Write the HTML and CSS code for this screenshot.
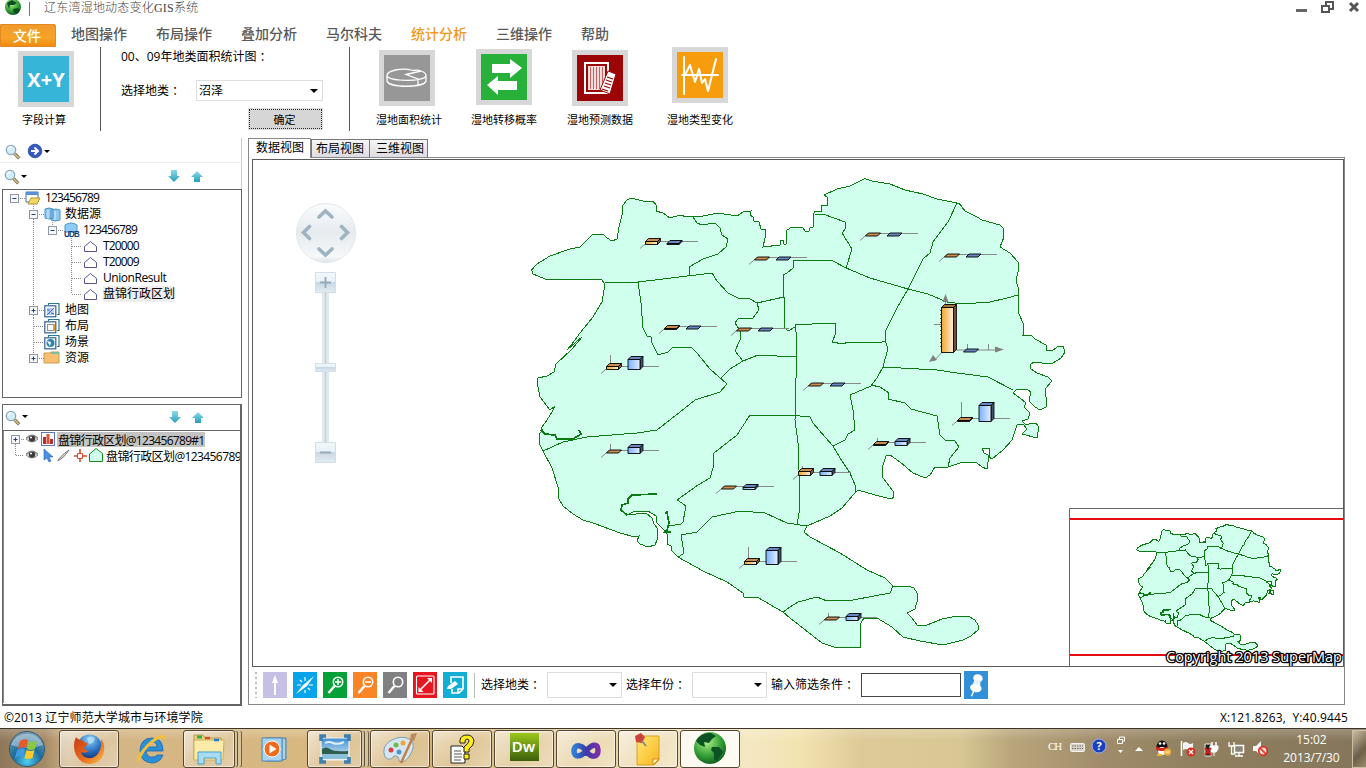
FILE: index.html
```html
<!DOCTYPE html>
<html lang="zh-CN">
<head>
<meta charset="utf-8">
<title>辽东湾湿地动态变化GIS系统</title>
<link rel="stylesheet" href="styles.css">
</head>
<body>
<svg class="defs" width="0" height="0">
  <defs>
    <radialGradient id="gGlobe" cx=".4" cy=".3" r=".75"><stop offset="0" stop-color="#b5f08a"/><stop offset=".55" stop-color="#3aa63a"/><stop offset="1" stop-color="#0b5a1c"/></radialGradient>
    <linearGradient id="gOrange"><stop offset="0" stop-color="#f0a52c"/><stop offset="1" stop-color="#fff0dc"/></linearGradient>
    <linearGradient id="gBlue"><stop offset="0" stop-color="#78b0ff"/><stop offset="1" stop-color="#e4efff"/></linearGradient>
    <linearGradient id="gArrow" x2="0" y2="1"><stop offset="0" stop-color="#8adcea"/><stop offset="1" stop-color="#2a9dba"/></linearGradient>
    <linearGradient id="gPad" x2="0" y2="1"><stop offset="0" stop-color="#fafcfd"/><stop offset=".5" stop-color="#e6ebef"/><stop offset=".9" stop-color="#f6f8fa"/><stop offset="1" stop-color="#dfe4e8"/></linearGradient>
    <linearGradient id="gKey" x2="0" y2="1"><stop offset="0" stop-color="#f3f9fc"/><stop offset=".49" stop-color="#e6f0f6"/><stop offset=".5" stop-color="#c9d8e2"/><stop offset="1" stop-color="#e2ecf3"/></linearGradient>
    <radialGradient id="gOrb" cx=".5" cy=".85" r=".9"><stop offset="0" stop-color="#4fd0f0"/><stop offset=".45" stop-color="#1c6c9c"/><stop offset="1" stop-color="#8aa9ba"/></radialGradient>
    <radialGradient id="gFox" cx=".5" cy=".2" r=".8"><stop offset="0" stop-color="#8fd0f5"/><stop offset=".6" stop-color="#2a6fc0"/><stop offset="1" stop-color="#12336f"/></radialGradient>
    <linearGradient id="gFlame" x2="1" y2="1"><stop offset="0" stop-color="#c93a14"/><stop offset=".55" stop-color="#ea6a1c"/><stop offset="1" stop-color="#f8c04a"/></linearGradient>
    <linearGradient id="gVs"><stop offset="0" stop-color="#2f7fd4"/><stop offset=".5" stop-color="#3c3aa8"/><stop offset="1" stop-color="#7a2fa8"/></linearGradient>
    <linearGradient id="gNote" x2="1" y2="1"><stop offset="0" stop-color="#ffe873"/><stop offset="1" stop-color="#f8b520"/></linearGradient>
    <linearGradient id="gSky" x2="0" y2="1"><stop offset="0" stop-color="#3d8fd0"/><stop offset="1" stop-color="#e4f3fa"/></linearGradient>

    <g id="mag"><circle cx="6" cy="6" r="4.700" fill="#d4ecf8" stroke="#8ba9bd" stroke-width="1.300"/><path d="M3.500 5.500a3 3 0 0 1 3-2.500" stroke="#fff" stroke-width="1.300" fill="none"/><path d="M9.700 9.700l4.400 4.600" stroke="#7d6c48" stroke-width="3.200"/><path d="M9.700 9.700l4 4.200" stroke="#d8c38c" stroke-width="1.500"/></g>
    <path id="down" d="M3 0h6v6h3l-6 6-6-6h3z" fill="url(#gArrow)"/>
    <path id="up" d="M6 0l6 6H9v5H3V6H0z" fill="url(#gArrow)"/>
    <g id="minus"><rect x=".5" y=".5" width="8" height="8" fill="#f6f7fa" stroke="#8f97a8"/><path d="M2.500 4.500h4" stroke="#24407c"/></g>
    <g id="plus"><use href="#minus"/><path d="M4.500 2.500v4" stroke="#24407c"/></g>
    <path id="poly" d="M.5 6.500L6.500 1.500 12.500 6.500V11.500H.5z" fill="#fff" stroke="#55558c"/>
    <g id="pages"><path d="M4.500 2V.5h10.500v11h-2" fill="#fff" stroke="#2e7a8c" stroke-width="1.200"/><rect x=".8" y="2.800" width="11" height="11" fill="#fff" stroke="#2e5f9c" stroke-width="1.200"/></g>
    <g id="eye"><path d="M0 5Q6-1 12 5 6 11 0 5z" fill="#e2e2e2" stroke="#8b8b8b"/><circle cx="6" cy="4.600" r="3.200" fill="#3c3c3c"/><circle cx="5" cy="3.500" r="1" fill="#fff"/><path d="M0 4Q6-2 12 4" fill="none" stroke="#777"/></g>

    <g id="region">
      <path class="land" d="M531.500 270L537 264 550 256 570 249 580 247 587 240 592 235 603 234 607 238 612 241 617 239 619 227 622 215 623 205 627 200 631 198 643 201 653 201 656 205 656 211 663 213 670 218 680 215 687 217 703 216 718 213 737 216 743 212 751 211 750 215 753 217 754 221 759 222 761 229 766 230 765 238 763 247 780 245 781 240 783 240 784 244 786 244 787 230 792 227 803 228 805 231 809 231 810 228 813 227 813 215 815 211 821 212 822 205 827 205 827 197 824 195 837 189 850 186 865 178.500 872 181 890 184 905 190 923 194 937 199 957 203 959 203 965 211 977 217 982 220 1000 225 1003 228 1004 237 1000 247 1010 253 1018 262 1018 272 1016 280 1018 287 1019 314 1024 325 1023 335 1031 335 1035 339 1046 345 1046 350 1052 351 1057 347 1063 346 1065 352 1061 358 1053 363 1042 363 1034 362 1030 365 1031 369 1037 373 1048 377 1052 381 1046 388 1045 394 1047 400 1046 407 1040 410 1035 407 1029 401 1031 392 1027 389 1017 389 1013 393 1020 398 1026 403 1024 407 1030 413 1028 419 1022 421 1025 424 1029 424 1036 423 1039 427 1037 438 1022 434 1027 429 1023 424 1017 425 1012 440 1003 450 992 459 989 457 990 448 982 448 984 453 988 455 988 462 987 469 982 467 977 463 963 462 948 467 935 467 930 475 925 478 913 473 900 462 890 455 886 456 882 468 883 478 893 491 894 497 891 499 875 495 858 490 853 495 842 508 830 516 807 526 804 532 810 537 840 553 867 570 885 578 893 586 908 586 914 588 917 593 917 602 915 609 907 613 912 618 917 625 927 625 942 619 957 616 968 616 975 620 978 625 978 630 971 636 963 640 943 645 920 641 903 637 892 627 877 618 864 618 861 623 860 635 861 647 837 648 822 643 790 618 783 612 757 597 744 597 743 593 727 582 703 571 678 557 672 551 671 546 667 544 668 535 663 529 657 523 656 516 648 511 635 511 627 515 636 514 646 513 652 518 654 524 658 529 657 540 655 545 648 547 640 544 637 541 639 536 635 537 620 533 593 523 583 520 573 514 563 506 558 497 558 487 552 468 543 451 539 443 540 433 543 430 541 428 545 423 552 412 555 406 550 410 540 397 537 382 538 378 547 376 554 372 556 364 572 349 582 337 575 343 567 350 572 344 580 333 593 317 602 302 605 284 602 280 587 279 563 280 545 279 533 274z"/>
      <path class="edge" d="M693 217L697 223 702 225 715 223 720 228 722 235 728 239 726 247 718 254 703 259 689 267 690 276M605 283L638 282 663 279 712 273 717 281 728 293 738 298 750 299 757 303 784 297M638 282L641 303 643 328 647 336 651 337 652 343 658 355 668 352 673 347 691 347 697 353 710 369 727 384 720 392 695 400 680 412 657 430 637 433 587 437 563 442 543 451M720 379L730 369 743 361 758 355 777 356 797 356M743 361L735 351 740 340 741 332 735 323 738 319 753 318 759 310 757 303M784 297L785 328 788 331 795 327 795 324 812 324 835 323 836 333 832 342 843 344 848 342 882 342 885 341M784 297L783 275 787 273 793 268 793 260 833 261 846 268 870 278 908 289 928 294 947 302 963 304 990 302 1007 298 1018 295M815 214L823 214 845 222 846 228 842 233 847 241 852 249 846 268M957 203L948 222 933 242 930 253 923 259 908 289 897 308 886 330 885 341 888 348 883 367 877 378 871 386 850 395 853 410 855 430 848 434 845 440 833 446 825 437 813 423 810 417 790 415 750 415 737 435 714 453 713 468 710 478 698 485 677 500 682 503 686 506 683 522 681 524 669 526M795 327L797 337 795 420 798 443 800 497 799 513 797 525M883 367L937 370 957 373 988 377 1013 390M871 385L880 387 889 393 888 399 905 403 911 409 937 416 940 435 945 440 955 441 959 447 950 458 948 467M833 446L840 458 850 473 855 485 856 492M678 557L683 554 683 547 681 535 697 532 712 517 740 511 765 513 787 523 807 526M783 612L790 607 798 602 817 597 827 601 853 600 890 593 893 586"/>
      <path class="bank" d="M541 430L545 434 555 435 557 439 573 439 581 434 579 430M657 494L632 495 628 499 628 503 622 505 621 510 627 515M665 513L667 512 669 523 667 530 665 532 671 532"/>
    </g>
  </defs>
</svg>

<header class="titlebar">
  <svg width="38" height="20" viewBox="0 0 38 20"><circle cx="13" cy="7" r="8" fill="url(#gGlobe)"/><path d="M7 3l5-3 5 3-3 2-4 0-1 4zM13 9l5-1 2 2-3 4-3-1z" fill="#0c4f20"/><path d="M29.500 2v14" stroke="#777"/></svg>
  <span class="title">辽东湾湿地动态变化GIS系统</span>
  <svg class="wincontrols" width="76" height="20" viewBox="1290 0 76 20"><path d="M1296 9h11v3h-11z" fill="#666"/><path d="M1322 6h7v6h-7zM1326 5V2h7v7h-4" fill="none" stroke="#555" stroke-width="2"/><path d="M1350 3l8 8m0-8l-8 8" stroke="#555" stroke-width="3"/></svg>
</header>

<nav class="menu">
  <span class="file">文件</span>
  <span class="item">地图操作</span><span class="item">布局操作</span><span class="item">叠加分析</span><span class="item">马尔科夫</span><span class="item current">统计分析</span><span class="item">三维操作</span><span class="item">帮助</span>
</nav>

<section class="ribbon">
  <div class="tool calc"><div class="tile cyan">X+Y</div><span>字段计算</span></div>
  <div class="stat">
    <p>00、09年地类面积统计图<i class="colon">：</i></p>
    <div class="row"><span>选择地类<i class="colon">：</i></span><span class="select big">沼泽</span></div>
    <span class="ok">确定</span>
  </div>
  <div class="tools">
    <div class="tool t1"><svg class="tile gray" viewBox="0 0 46 46"><g fill="none" stroke="#fff" stroke-width="1.300"><path d="M29 15.500C17 12 3 16 3 20.500 4 27 42 27 42 20.500c0-2-2-3.500-5-4.500L22 19.500l12 4.500v5.500M3 20.500V26c2 7 37 7 39 0v-5.500M29 15.500q5-1 8 .5"/></g></svg><span>湿地面积统计</span></div>
    <div class="tool t2"><svg class="tile green" viewBox="0 0 46 46"><path d="M11 10h18V5l12 9-12 10v-5H11zM36 27H17v-5L6 31l11 10v-5h19z" fill="#fff"/></svg><span>湿地转移概率</span></div>
    <div class="tool t3"><svg class="tile red" viewBox="0 0 46 46"><path d="M8 8h23v30H8z" fill="none" stroke="#fff" stroke-width="2"/><path d="M11 11h17v24H11z" fill="#f3dede"/><path d="M13.500 12v22m3-22v22m3-22v22m3-22v22m3-22v22" stroke="#c86060"/><path d="M31 16l8 3-6 20-10-4z" fill="#fff" stroke="#9b0505"/><path d="M30 22l6 2m-7 1l6 2m-7 1l6 2m-7 1l6 2m-8 1l6 2" stroke="#9b0505" stroke-width="1.200"/></svg><span>湿地预测数据</span></div>
    <div class="tool t4"><svg class="tile amber" viewBox="0 0 46 46"><g fill="none" stroke="#fff" stroke-width="2" stroke-linejoin="round" stroke-linecap="round"><path d="M7 5v37M5 23h36"/><path d="M8 23l5-10 5 17 4-13 3 14 3-4 3 12 8-32"/></g></svg><span>湿地类型变化</span></div>
  </div>
</section>

<main class="work">
  <aside class="side">
    <div class="bar first"><svg width="60" height="24" viewBox="0 140 60 24"><use href="#mag" x="5" y="144"/><circle cx="35" cy="151" r="6.800" fill="#3459c4" stroke="#2b4595" stroke-width=".8"/><path d="M31 151h7m-3.500-3.500l3.500 3.500-3.500 3.500" stroke="#fff" stroke-width="2" fill="none"/><path d="M44 150h6l-3 3z"/></svg></div>
    <div class="bar second"><svg width="240" height="25" viewBox="0 164 240 25"><use href="#mag" x="4" y="169"/><path d="M21 175h6l-3 3z"/><use href="#down" x="168" y="170"/><use href="#up" x="191" y="171"/></svg></div>
    <div class="tree">
      <div class="node"><svg width="42" height="16" viewBox="3 190 42 16"><use href="#minus" x="10" y="194"/><path class="dots" d="M20 198.500h6M33.500 204v2"/><path d="M26 192h12v10H26z" fill="#fff" stroke="#3b6fb8"/><path d="M26 192h12v3H26z" fill="#5a8fd8"/><path d="M28 204l3-6h9l-3 6z" fill="#f5d868" stroke="#b8922c"/></svg><span>123456789</span></div>
      <div class="node"><svg width="62" height="16" viewBox="3 206 62 16"><use href="#minus" x="29" y="210"/><path class="dots" d="M33.500 206v4m0 9v3M39 214.500h6M52.500 220v2"/><path d="M45 209q4-2 8 0v9q-4 2-8 0zM51 210q5-2 9 0v10q-4 2-9 0z" fill="#8cc8f0" stroke="#4a90c8"/><path d="M48 210v9m7-8v9" stroke="#d8f0ff"/></svg><span>数据源</span></div>
      <div class="node"><svg width="80" height="16" viewBox="3 222 80 16"><use href="#minus" x="48" y="226"/><path class="dots" d="M33.500 222v16M52.500 222v4M58 230.500h6M71.500 236v2"/><path d="M65 225q6-4 12 0v7H65z" fill="#8cccf4" stroke="#4a98d0"/><text x="64" y="237" class="udb" textLength="15" lengthAdjust="spacingAndGlyphs">UDB</text></svg><span>123456789</span></div>
      <div class="node"><svg width="100" height="16" viewBox="3 238 100 16"><path class="dots" d="M33.500 238v16M71.500 238v16M72 246.500h10"/><use href="#poly" x="84" y="240"/></svg><span>T20000</span></div>
      <div class="node"><svg width="100" height="16" viewBox="3 238 100 16"><path class="dots" d="M33.500 238v16M71.500 238v16M72 246.500h10"/><use href="#poly" x="84" y="240"/></svg><span>T20009</span></div>
      <div class="node"><svg width="100" height="16" viewBox="3 238 100 16"><path class="dots" d="M33.500 238v16M71.500 238v16M72 246.500h10"/><use href="#poly" x="84" y="240"/></svg><span class="wide">UnionResult</span></div>
      <div class="node"><svg width="100" height="16" viewBox="3 238 100 16"><path class="dots" d="M33.500 238v16M71.500 238v8M72 246.500h10"/><use href="#poly" x="84" y="240"/></svg><span class="soft">盘锦行政区划</span></div>
      <div class="node"><svg width="62" height="16" viewBox="3 302 62 16"><path class="dots" d="M33.500 302v4m0 9v3M39 310.500h5"/><use href="#plus" x="29" y="306"/><use href="#pages" x="44" y="303"/><path d="M47 308h7v7h-7z" fill="#b8cef4"/><path d="M47 315l7-7m-7 2l3 0m1 3l3 1" stroke="#3a6ac8"/></svg><span>地图</span></div>
      <div class="node"><svg width="62" height="16" viewBox="3 318 62 16"><path class="dots" d="M33.500 318v16M34 326.500h10"/><use href="#pages" x="44" y="319"/><path d="M47.500 324.500h6v6h-6z" fill="none" stroke="#222" stroke-dasharray="1 1"/><path d="M54 324v7" stroke="#e09a2c" stroke-width="2"/></svg><span>布局</span></div>
      <div class="node"><svg width="62" height="16" viewBox="3 334 62 16"><path class="dots" d="M33.500 334v16M34 342.500h10"/><use href="#pages" x="44" y="335"/><circle cx="50.500" cy="343" r="4" fill="#2e86b0"/><path d="M47 341l4 1-1 4z" fill="#fff"/></svg><span>场景</span></div>
      <div class="node"><svg width="62" height="16" viewBox="3 350 62 16"><path class="dots" d="M33.500 350v4M39 358.500h5"/><use href="#plus" x="29" y="354"/><path d="M44 353h6l1-1h8v11H44z" fill="#f8c070" stroke="#c8a050"/><path d="M51 352h8v2h-8z" fill="#7ac0a0"/></svg><span>资源</span></div>
    </div>
    <div class="layers">
      <div class="bar"><svg width="238" height="25" viewBox="3 406 238 25"><use href="#mag" x="5" y="411"/><path d="M22 416h6l-3 3z"/><use href="#down" x="169" y="412"/><use href="#up" x="192" y="413"/></svg></div>
      <div class="list">
        <div class="node"><svg width="53" height="16" viewBox="4 432 53 16"><use href="#plus" x="12" y="435"/><path class="dots" d="M16.500 444v4M22 439.500h4"/><use href="#eye" x="27" y="434"/><rect x="42.500" y="432.500" width="13" height="13" fill="#fff" stroke="#5a78c0"/><path d="M44 437h3v7h-3zM51 439h3v5h-3z" fill="#b03030"/><path d="M47.500 434h3v10h-3z" fill="#e05030"/></svg><span class="chosen">盘锦行政区划@123456789#1</span></div>
        <div class="node"><svg width="100" height="16" viewBox="4 448 100 16"><path class="dots" d="M16.500 448v8M17 455.500h8"/><use href="#eye" x="27" y="450"/><path d="M45 449l9 8-4 0 2 4-2 1-2-4-3 2z" fill="#4a90e0" stroke="#2a5cae" stroke-width=".6"/><path d="M59 461q1-4 11-11-5 8-11 11z" fill="#ddd" stroke="#777"/><path d="M81 449v4m0 5v4m-6-6h4m5 0h4" stroke="#d84a28" stroke-width="1.600"/><path d="M78.500 453.500h5v5h-5z" fill="#fff" stroke="#d84a28"/><path d="M90.500 454L97 448.500l6.500 5v8h-13z" fill="#cffeee" stroke="#1a8a1a"/></svg><span>盘锦行政区划@123456789</span></div>
      </div>
    </div>
  </aside>

  <section class="view">
    <div class="tabs"><span class="tab on">数据视图</span><span class="tab">布局视图</span><span class="tab">三维视图</span></div>
    <div class="frame">
      <div class="mapbox">
        <svg id="map" width="1090" height="506" viewBox="253 160 1090 506">
          <use href="#region"/>
          <g id="charts"></g>
          <g class="compass">
            <circle cx="326" cy="233" r="29.500" fill="url(#gPad)" stroke="#e2e7ea"/>
            <path d="M319 217l6.500-6 6.500 6M319 249l6.500 6 6.500-6M309.500 226.500l-6 6 6 6M341.500 226.500l6 6-6 6" fill="none" stroke="#9fb4c2" stroke-width="3.600" stroke-linecap="round"/>
            <path d="M322 293h7v149h-7z" fill="#e0e9f0"/><path d="M325.500 293v149" stroke="#c4d2de" stroke-width="1.500"/>
            <path d="M315.500 272.500h20v20h-20z" fill="url(#gKey)" stroke="#d3dfe7"/><path d="M315.500 363.500h20v8h-20z" fill="url(#gKey)" stroke="#d3dfe7"/><path d="M315.500 442.500h20v20h-20z" fill="url(#gKey)" stroke="#d3dfe7"/>
            <path d="M320 282.500h11M325.500 277v11M320 452.500h11" stroke="#98a8b8" stroke-width="1.800"/>
          </g>
          <g class="inset">
            <path d="M1069.500 666V508.500H1343" fill="#fff" stroke="#666"/>
            <path d="M1070 519h273M1070 655h273" stroke="#e60b10" stroke-width="2"/>
            <use href="#region" transform="translate(993.200 476.200) scale(.27)"/>
          </g>
          <text class="copy" x="1166" y="662" textLength="176" lengthAdjust="spacingAndGlyphs">Copyright 2013 SuperMap</text>
        </svg>
      </div>
      <div class="maptools">
        <i class="grip"></i>
        <svg class="mt lilac" viewBox="0 0 24 26"><path d="M12 3l3 8h-2v12h-2V11H9z" fill="#fff"/></svg>
        <svg class="mt sky" viewBox="0 0 24 26"><path d="M3 22l7-9 11-9-7 10z" fill="#fff"/><path d="M12 5v4m0 9v3M4 13h4m8 0h4M7 8l2 2m6 6l2 2" stroke="#fff" stroke-width="1.200"/></svg>
        <svg class="mt leaf" viewBox="0 0 24 26"><circle cx="15" cy="10" r="4.700" fill="none" stroke="#fff" stroke-width="1.600"/><path d="M11.500 14l-6 7" stroke="#fff" stroke-width="2.500"/><path d="M12 10h6m-3-3v6" stroke="#fff" stroke-width="1.500"/></svg>
        <svg class="mt tang" viewBox="0 0 24 26"><circle cx="15" cy="10" r="4.700" fill="none" stroke="#fff" stroke-width="1.600"/><path d="M11.500 14l-6 7" stroke="#fff" stroke-width="2.500"/><path d="M12 10h6" stroke="#fff" stroke-width="1.500"/></svg>
        <svg class="mt stone" viewBox="0 0 24 26"><circle cx="15" cy="10" r="4.700" fill="none" stroke="#fff" stroke-width="1.600"/><path d="M11.500 14l-6 7" stroke="#fff" stroke-width="2.500"/></svg>
        <svg class="mt ruby" viewBox="0 0 24 26"><rect x="3.500" y="4" width="17.500" height="18" rx="1" fill="none" stroke="#fff" stroke-width="1.100"/><path d="M7 18L17 8" stroke="#fff" stroke-width="1.600"/><path d="M14 6h5v5zM5.500 15v5h5z" fill="#fff"/></svg>
        <svg class="mt aqua" viewBox="0 0 24 26"><path d="M8 11V5h12v12l-4 4H9v-4M20 17h-5v4" fill="none" stroke="#fff" stroke-width="1.600"/><path d="M4 17l1-3 7-5 3 3-7 5z" fill="#fff"/></svg>
        <i class="vsep"></i>
        <span class="l1">选择地类<i class="colon">：</i></span><span class="select s1"></span><span class="l2">选择年份<i class="colon">：</i></span><span class="select s2"></span><span class="l3">输入筛选条件<i class="colon">：</i></span><span class="input"></span>
        <svg class="pin" viewBox="0 0 24 28"><g transform="rotate(12 12 14)"><ellipse cx="12.500" cy="7" rx="4.800" ry="4" fill="#fff"/><path d="M9.500 9h6l1 6h-8z" fill="#e6f1fa"/><ellipse cx="12.500" cy="17" rx="5.800" ry="4.200" fill="#fff"/><path d="M11 20l-1 6" stroke="#fff" stroke-width="1.500"/></g></svg>
      </div>
    </div>
  </section>
</main>

<footer class="status"><span>©2013 辽宁师范大学城市与环境学院</span><span class="coords">X:121.8263,&nbsp; Y:40.9445</span></footer>

<footer class="taskbar">
  <div class="task bare start"><svg width="40" height="38" viewBox="0 0 40 38"><circle cx="20" cy="19" r="17.500" fill="url(#gOrb)" stroke="#35586e"/><path d="M4 15a17 17 0 0 1 32 0q-16 6-32 0z" fill="#fff" opacity=".35"/><path d="M13 11q4-3 8-1l-2 8q-4-2-8 1z" fill="#e8592a"/><path d="M22 11q4 2 8 0l-2 8q-4 2-8 0z" fill="#8cc83c"/><path d="M10 20q4-3 8-1l-2 8q-4-2-8 1z" fill="#3f9ae0"/><path d="M19.500 20q4 2 8 0l-2 8q-4 2-8 0z" fill="#fbc92c"/></svg></div>
  <div class="task w59"><svg width="34" height="34" viewBox="0 0 34 34"><circle cx="17.500" cy="15" r="12.500" fill="url(#gFox)"/><path d="M15 6q4-3 8 0l-2 5-4 1z" fill="#bfe4f8" opacity=".7"/><path d="M4 5q-4 9 0 18 5 9 14 9 12-1 14-13 1-7-3-12 1 8-2 13-4 7-11 6-6-1-7-6 4 2 8-1-5-1-5-4 3-1 4-4-4 0-6-3-4 0-6-3z" fill="url(#gFlame)"/></svg></div>
  <div class="task bare w65"><svg width="34" height="34" viewBox="0 0 34 34"><path d="M29 19H12q1 7 7 6 3 0 4-2h6q-3 8-11 8Q6 30 6 18 7 6 18 6q11 0 11 13zM12 15h11q0-5-5-5t-6 5z" fill="#2b8fd6" stroke="#1a64ac" stroke-width=".8"/><path d="M5 31q-5-3 3-13Q19 4 28 3q5 0 3 6 0-4-4-3-8 3-16 13-6 9-6 12z" fill="#f4bf38"/></svg></div>
  <div class="task w51 stack"><svg width="36" height="34" viewBox="0 0 36 34"><path d="M3 3h9l2 3h16v21H3z" fill="#ecd27c" stroke="#b99a4a"/><path d="M3 8h30l-1 20H3z" fill="#fbeba8" stroke="#cdb160"/><path d="M6 5h5" stroke="#2db04a" stroke-width="3"/><path d="M14 6h5" stroke="#d84a2c" stroke-width="2.500"/><path d="M23 8h5" stroke="#2a78d0" stroke-width="2.500"/><path d="M7 31V20h23v12h-5v-6H13v6H7z" fill="#a8dcf4" stroke="#4c9fc8"/></svg></div>
  <div class="task bare w64"><svg width="34" height="34" viewBox="0 0 34 34"><path d="M8 6h20v21l-6 2H8z" fill="#7fb8dc" stroke="#4c86b0"/><path d="M26 7v20" stroke="#d4ebf8"/><path d="M4 6h20v23H4z" fill="#a8d4ee" stroke="#4c86b0"/><circle cx="14" cy="17" r="8" fill="#f06a1c" stroke="#fff"/><path d="M11.500 12.500l7 4.500-7 4.500z" fill="#fff"/></svg></div>
  <div class="task w53 stack"><svg width="34" height="34" viewBox="0 0 34 34"><path d="M3 6h28v22H3z" fill="url(#gSky)" stroke="#f4f8fa"/><path d="M4 17q4-3 8 0t18 2v3H4z" fill="#2f5f4c"/><path d="M4 22h26v5H4z" fill="#8cc0d8"/><path d="M7 11q4-2 8 0 5 2 11-1" stroke="#fff" stroke-width="2" fill="none" opacity=".8"/><path d="M3 9V4h5M26 4h5v5M31 25v5h-5M8 30H3v-5" fill="none" stroke="#3d7fae" stroke-width="3.500"/></svg></div>
  <div class="task w59 paint"><svg width="36" height="34" viewBox="0 0 36 34"><path d="M3 25Q-1 15 8 9q12-7 21-1 5 6-1 15-5 9-11 6 0-6-5-5-4 6-9 1z" fill="#d6e6ee" stroke="#7da0b4"/><circle cx="9" cy="18" r="2.500" fill="#d84040"/><circle cx="14" cy="13" r="2.500" fill="#6cbc4c"/><circle cx="21" cy="11" r="2.500" fill="#f0a53c"/><circle cx="17" cy="20" r="2.500" fill="#4c96d0"/><path d="M31 5L19 31" stroke="#c08048" stroke-width="2.500"/><path d="M28 8l1-6 6-1-3 8z" fill="#b98b62"/></svg></div>
  <div class="task w59 g2"><svg width="34" height="34" viewBox="0 0 34 34"><path d="M6 14h11l3 3v14H6z" fill="#fff" stroke="#222"/><path d="M9 19h7m-7 3h8m-8 3h8m-8 3h7" stroke="#555"/><path d="M15 11V8q1-5 7-5t7 6q0 4-5 8v3h-5v-5q5-4 5-6 0-2-2-2t-2 3v1zM19 22h5v5h-5z" fill="#ffed10" stroke="#222"/></svg></div>
  <div class="task w59 g3"><span class="dw">Dw</span></div>
  <div class="task w59 g3"><svg width="34" height="34" viewBox="0 0 34 34"><path d="M17 19C12 12 5 12 5 19s7 6 12 0 12-9 12-1-7 8-12 1" fill="none" stroke="url(#gVs)" stroke-width="5.500"/></svg></div>
  <div class="task w59 g3"><svg width="34" height="34" viewBox="0 0 34 34"><path d="M6 4h22v24l-5 5H6z" fill="url(#gNote)" stroke="#d9a128"/><path d="M28 27h-6v6z" fill="#fff3b8" stroke="#c98f1c"/><path d="M4 4l6-3 4 4-3 6-6-1z" fill="#c8443c"/><path d="M11 9l4 5" stroke="#888" stroke-width="2"/></svg></div>
  <div class="task w59 g2 lit"><svg width="36" height="36" viewBox="0 0 36 36"><circle cx="18" cy="17" r="16" fill="url(#gGlobe)"/><path d="M4 10Q9 1 19 2l5 3-4 3-3 4-5-1 1 5-5-2zM20 16l7 0 4 5-6 9-3-2 0-6-3-3z" fill="#0c5224"/></svg></div>
  <div class="tray">
    <span class="ch">CH</span>
    <svg width="205" height="38" viewBox="1066 730 205 38">
      <rect x="1070.500" y="743.500" width="14" height="8" rx="1" fill="#d8d4cc" stroke="#f4f2ee"/><path d="M1072 746h11m-11 2.500h11" stroke="#776a58" stroke-dasharray="1.500 1"/>
      <circle cx="1099" cy="746" r="7" fill="#1a3fc0" stroke="#9db4e8"/><text x="1099" y="750" class="q">?</text>
      <path d="M1117.500 739.500h5v4h-5zM1119.500 739v-2h5v4h-2" fill="none" stroke="#fff"/><path d="M1118 750h5l-2.500 3z" fill="#fff"/>
      <path d="M1135 751l4-4 4 4z" fill="#fff"/>
      <ellipse cx="1162" cy="747" rx="5.500" ry="6.500" fill="#111"/><ellipse cx="1162" cy="751" rx="4" ry="4" fill="#fff"/><circle cx="1160" cy="743.500" r="1.300" fill="#fff"/><circle cx="1164" cy="743.500" r="1.300" fill="#fff"/><path d="M1156 746.500q6 3 12 0v3q-6 3-12 0z" fill="#d8281c"/><path d="M1157 755h5" stroke="#f8b020" stroke-width="2"/><circle cx="1167.500" cy="752" r="3.500" fill="#f4b030"/><path d="M1165.500 752h4" stroke="#fff"/>
      <path d="M1181.500 741v15" stroke="#fff" stroke-width="1.500"/><path d="M1183 743q3-2 5 0t5 0v7q-3 2-5 0t-5 0z" fill="#f4f4f4"/><circle cx="1191" cy="752" r="4.500" fill="#d83020"/><path d="M1189 750l4 4m0-4l-4 4" stroke="#fff" stroke-width="1.300"/>
      <path d="M1205 744h6v12h-6z" fill="#222" stroke="#eee"/><path d="M1212 742v4m4-4v4" stroke="#fff" stroke-width="1.500"/><path d="M1210 746h8v3l-2 3h-4l-2-3zM1214 752v4" fill="#fff" stroke="#fff"/><path d="M1205 748l6 7m0-7l-6 7" stroke="#d02018" stroke-width="2"/>
      <path d="M1234.500 745.500h9v7h-9z" fill="#8a8478" stroke="#fff" stroke-width="1.500"/><path d="M1235 756h8m-4-3v3M1229 742v4h5v-4m-2.500 4v8h4" stroke="#fff" stroke-width="1.300" fill="none"/>
      <path d="M1253 746h3l5-5v15l-5-5h-3z" fill="#f4f4f4"/><circle cx="1263" cy="751" r="4.300" fill="#f0d4d0" stroke="#d83020" stroke-width="1.700"/><path d="M1260 748l6 6" stroke="#d83020" stroke-width="1.500"/>
    </svg>
    <div class="clock"><span>15:02</span><span>2013/7/30</span></div>
    <i class="peek"></i>
  </div>
</footer>
<script src="charts.js"></script>
</body>
</html>
```
FILE: styles.css
```css
* { box-sizing: border-box; }
body { margin: 0; width: 1366px; height: 768px; overflow: hidden; display: flex; flex-direction: column; background: #fff; color: #000; font: 12px/16px "Open Sans", "Noto Sans CJK SC", sans-serif; white-space: nowrap; }
svg { display: block; flex: none; }
.defs { position: absolute; }
.colon { display: inline-block; padding-left: 3px; font-style: normal; }

.titlebar { height: 20px; display: flex; }
.title { margin-left: 6px; color: #444; font: 300 12px/17px "Liberation Serif", "Noto Sans CJK SC", serif; letter-spacing: .22px; }
.wincontrols { margin-left: auto; }

.menu { height: 27px; display: flex; align-items: flex-start; font: 500 14px/26px "Noto Sans CJK SC", sans-serif; color: #5a5a5a; }
.file { width: 56px; height: 23px; margin: 4px 15px 0 0; line-height: 20px; text-align: center; color: #fff; background: linear-gradient(#ef9a2c, #f7a428 60%, #f08c10); border: 1px solid #e08a20; border-radius: 0 2px 0 0; padding-right: 2px; }
.item { width: 85px; }
.current { color: #f09a1c; }

.ribbon { height: 91px; display: flex; }
.tool { display: flex; flex-direction: column; font-size: 11px; }
.tool span { margin-top: auto; height: 20px; line-height: 17px; }
.tile { width: 56px; height: 56px; border: 5px solid #d7d7d7; }
.calc { width: 101px; height: 84px; padding: 4px 0 0 18px; border-right: 1px solid #555; }
.calc span { margin-left: 4px; }
.calc .tile { color: #fff; font: 700 20px/48px "Open Sans", sans-serif; text-align: center; }
.cyan { background: #36b5d8; }
.gray { background: #979797; }
.green { background: #27b03a; }
.red { background: #9b0505; }
.amber { background: #f79c0c; }
.stat { width: 249px; height: 84px; padding: 2px 26px 0 20px; border-right: 1px solid #555; display: flex; flex-direction: column; }
.stat p { margin: 0 0 15px; height: 16px; }
.stat .row { display: flex; justify-content: space-between; height: 21px; line-height: 22px; }
.select { display: flex; justify-content: space-between; align-items: center; border: 1px solid #ddd; height: 21px; padding: 0 4px 0 2px; }
.select::after { content: ""; margin-left: auto; border: 4px solid transparent; border-top-color: #000; border-bottom: 0; }
.big { width: 127px; line-height: 18px; }
.ok { align-self: flex-end; width: 75px; height: 22px; margin-top: 7px; background: #d6d6d6; border: 2px solid #ddd; outline: 1px dotted #222; outline-offset: -2px; text-align: center; font-size: 11px; line-height: 19px; padding-right: 2px; }
.tools { display: flex; padding-left: 26px; height: 84px; }
.t1 { width: 95px; padding-top: 3px; } .t1 .tile { margin-left: 3px; }
.t2 { width: 96px; padding-top: 2px; } .t2 .tile { margin-left: 5px; }
.t3 { width: 100px; padding-top: 3px; } .t3 .tile { margin-left: 5px; }
.t4 { width: 66px; } .t4 .tile { margin-left: 5px; }

.work { height: 570px; display: flex; }
.side { width: 248px; display: flex; flex-direction: column; }
.first { height: 25px; padding-top: 2px; width: 242px; border-right: 1px solid #ccc; border-bottom: 1px solid #eee; }
.second { height: 26px; padding-top: 1px; width: 242px; border-right: 1px solid #ccc; }
.tree { margin-left: 2px; width: 240px; height: 209px; border: 1px solid #646464; }
.node { height: 16px; display: flex; font-size: 12px; line-height: 15px; letter-spacing: -.85px; }
.tree .node:nth-child(n+7) span, .tree .node:nth-child(2) span { letter-spacing: 0; }
.tree .node:nth-child(-n+5) span { line-height: 16px; }
.tree .wide { letter-spacing: -.45px; line-height: 16px; }
.soft { background: #eee; }
.dots { fill: none; stroke: #888; stroke-dasharray: 1 1; }
.udb { font: 700 9px "Liberation Sans", sans-serif; fill: #123a70; }
.layers { margin: 6px 0 0 2px; width: 240px; height: 302px; border: 2px solid #646464; border-top-width: 1px; border-left-width: 1px; overflow: hidden; }
.layers .bar { height: 26px; border-bottom: 1px solid #646464; }
.list { padding-top: 1px; box-shadow: inset 1px 0 #888; height: 272px; }
.list .node span { font-size: 12px; letter-spacing: -.7px; line-height: 18px; padding-left: 2px; }
.list .node:last-child span { letter-spacing: -.6px; padding-left: 3px; }
.list .node .chosen { background: #c4c4c4; height: 15px; margin-left: 1px; padding-left: 1px; line-height: 17px; }

.view { width: 1097px; display: flex; flex-direction: column; }
.tabs { display: flex; height: 19px; align-items: flex-end; }
.tab { height: 18px; width: 59px; padding-left: 4px; line-height: 17px; border: 1px solid #777; border-bottom: 0; background: linear-gradient(#f6f6f6, #dcdce2); }
.tab + .tab + .tab { border-left: 0; width: 58px; padding-left: 6px; }
.tab.on { height: 20px; width: 63px; padding-left: 7px; background: #fff; margin-bottom: -1px; z-index: 1; border-color: #888; }
.frame { height: 548px; border: 1px solid #888; padding: 1px 1px 0 3px; }
.mapbox { width: 1092px; height: 508px; border: 1px solid #5a5a5a; }
.land { fill: #d0ffee; stroke: #0b7a10; vector-effect: non-scaling-stroke; shape-rendering: crispEdges; }
.edge { fill: none; stroke: #0b7a10; vector-effect: non-scaling-stroke; shape-rendering: crispEdges; }
.bank { fill: none; stroke: #0b7a10; stroke-width: 1.7; vector-effect: non-scaling-stroke; shape-rendering: crispEdges; }
.copy { font: 14px "Open Sans", sans-serif; fill: #fff; stroke: #000; stroke-width: 2.6px; paint-order: stroke; stroke-linejoin: round; }

.maptools { height: 36px; display: flex; align-items: center; padding-left: 3px; }
.grip { width: 2px; height: 26px; margin-right: 6px; background: repeating-linear-gradient(#bbb 0 2px, #fff 2px 5px); }
.mt { width: 24px; height: 26px; margin-right: 6px; margin-top: -1px; }
.lilac { background: #c6bfe6; } .sky { background: #06a4ea; } .leaf { background: #06a038; } .tang { background: #fb8426; } .stone { background: #808080; } .ruby { background: #e61620; } .aqua { background: #12aed4; }
.vsep { width: 1px; height: 25px; margin: 0 6px 0 1px; background: #bbb; }
.maptools .select { height: 26px; width: 75px; }
.l1, .l2 { width: 66px; }
.s1, .s2 { margin-right: 4px; }
.l3 { width: 90px; }
.input { width: 100px; height: 24px; border: 1px solid #444; margin-right: 3px; }
.pin { width: 24px; height: 28px; background: #3190d8; }

.status { height: 20px; display: flex; justify-content: space-between; padding: 2px 18px 0 4px; }
.status span:first-child { letter-spacing: .12px; }
.coords { letter-spacing: .15px; }

.taskbar { height: 40px; display: flex; border-top: 1px solid #3c352a; padding-top: 1px; background: linear-gradient(#fff3, #fff0 30%), linear-gradient(90deg, #8f785a 0, #a58a66 45px, #d3b587 70px, #d8b880 300px, #d3b173 430px, #e4cd9c 560px, #f4e8c2 750px, #f3e3b0 800px, #ddca98 860px, #d8c794 960px, #b9a67c 1010px, #a08c6a 1100px, #90805f 1200px, #85765c 1366px); }
.task { height: 38px; border: 1px solid #54462f; border-radius: 3px; box-shadow: inset 0 0 0 1px #fff8; background: linear-gradient(135deg, #fff9, #fff3 60%, #fff5); display: flex; align-items: center; justify-content: center; flex: none; }
.task.bare { border: 0; background: none; box-shadow: none; }
.start { width: 54px; margin-right: 5px; }
.w59 { width: 60px; } .w65 { width: 64px; } .w51 { width: 52px; } .w64 { width: 64px; } .w53 { width: 55px; }
.stack { margin-right: 8px; box-shadow: inset 0 0 0 1px #fff8, 3px 0 0 -1px #d8c49c, 4px 0 0 -1px #5c4e38, 7px 0 0 -1px #d8c49c, 8px 0 0 -1px #6c5e48; }
.g2, .g3 { margin-left: 2px; }
.lit { background: #fffc; }
.dw { width: 29px; height: 28px; margin-bottom: 4px; padding-right: 1px; background: linear-gradient(#9bc81e, #3c5e0a); color: #fff; font: 600 15px/27px "Noto Sans", sans-serif; text-align: center; }
.tray { margin-left: auto; display: flex; color: #fff; }
.ch { width: 18px; font: 11px/33px "Liberation Serif", serif; letter-spacing: -1px; }
.q { font: 700 11px "Open Sans", sans-serif; fill: #fff; text-anchor: middle; }
.clock { width: 81px; padding-top: 1px; display: flex; flex-direction: column; align-items: center; line-height: 18px; letter-spacing: -.05px; }
.peek { width: 14px; border: 1px solid #cabfa6; border-right: 0; background: linear-gradient(135deg, #c9bda2, #6d5f48 60%, #9a8a6c); }
```
FILE: charts.js
```js
// Two-bar 3D thematic charts: [x, baseline y, orange height, blue height, axis top]
const charts = [
  [645, 241.5, 3, 1, 0], [754, 257.5, 0, 0, 0], [865, 233.5, 0, 0, 0], [944, 254.5, 0, 0, 0],
  [664, 326.5, 1, 0, 0], [736, 328.5, 0, 0, 0], [606, 366.5, 3, 10, 355], [808, 383.5, 0, 0, 0],
  [957, 418.5, 1, 16, 402], [873, 442.5, 1, 4, 438], [798, 472.5, 4, 4, 466], [606, 450.5, 0, 6, 444],
  [721, 486.5, 0, 2, 0], [744, 561.5, 3, 14, 547], [824, 617.5, 0, 4, 613]
];

function bar(x, y, h, front, top, side) {
  const b = h ? y + 3 : y + 2.5, t = b - h;
  let s = `<path d="M${x} ${t}h12l3-3h-12z" fill="${top}" stroke="#000" stroke-width=".9"/>`;
  if (h) {
    s += `<path d="M${x + 12} ${t}l3-3v${h}l-3 3z" fill="${side}" stroke="#000" stroke-width=".8"/>`;
    s += `<path d="M${x} ${t}h12v${h}h-12z" fill="url(#${front})" stroke="#000" stroke-width=".9"/>`;
  }
  return s;
}

let out = '';
for (const [x, y, o, b, top] of charts) {
  out += `<path d="M${x - 5} ${y + 7}l8-7h50${top ? `M${x + 4.5} ${y}V${top}` : ''}" fill="none" stroke="#888"/>`;
  out += bar(x + 0.5, y, o, 'gOrange', '#c98d50', '#7a5a30');
  out += bar(x + 22, y, b, 'gBlue', '#6688c4', '#44566e');
}

out += '<path d="M934 361l10-11h56M945.500 350V297M934 324.500h7M967.500 344v6M988.500 344v6" fill="none" stroke="#888"/>';
out += '<path d="M945.500 294l3 8h-6zM1004 349.500l-9-3v6zM929 362l4-7 4 5z" fill="#808080"/>';
out += '<path d="M940.500 310v40" stroke="#555" stroke-dasharray="1 3"/>';
out += bar(941.5, 349.5, 45, 'gOrange', '#a87838', '#705030');
out += bar(963.5, 349.5, 0, 'gBlue', '#6688c4', '#44566e');
document.getElementById('charts').innerHTML = out;
```
